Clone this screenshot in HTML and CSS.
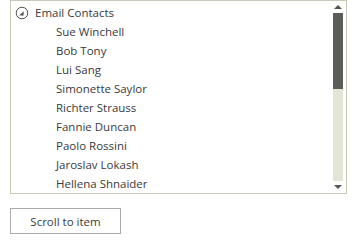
FILE: index.html
```html
<!DOCTYPE html>
<html lang="en">
<head>
    <meta charset="UTF-8">
    <title>Scroll to item</title>
    <link rel="stylesheet" href="styles.css">
</head>
<body>
    <div class="listbox">
        <div class="items">
            <div class="group">
                <svg class="toggle" width="14" height="14" viewBox="0 0 14 14">
                    <circle cx="7" cy="7" r="5.8" fill="none" stroke="#555" stroke-width="1"/>
                    <polygon points="4.2,9.6 8.6,9.6 8.6,5.2" fill="#555"/>
                </svg>
                <span>Email Contacts</span>
            </div>
            <div class="item">Sue Winchell</div>
            <div class="item">Bob Tony</div>
            <div class="item">Lui Sang</div>
            <div class="item">Simonette Saylor</div>
            <div class="item">Richter Strauss</div>
            <div class="item">Fannie Duncan</div>
            <div class="item">Paolo Rossini</div>
            <div class="item">Jaroslav Lokash</div>
            <div class="item">Hellena Shnaider</div>
        </div>
        <div class="scrollbar">
            <div class="arrow up"></div>
            <div class="track">
                <div class="thumb"></div>
            </div>
            <div class="arrow down"></div>
        </div>
    </div>

    <button class="scroll-btn">Scroll to item</button>
</body>
</html>
```

FILE: styles.css
```css
body {
    margin: 0;
    font-family: "Open Sans", "Noto Sans", sans-serif;
    font-size: 11.5px;
    color: #3a3a3a;
    background: white;
}
.listbox {
    display: flex;
    margin-left: 10px;
    width: 335px;
    height: 192px;
    border: 1px solid #c9c9b8;
    overflow: hidden;
}
.items {
    flex: 1;
    padding-top: 2px;
}
.group {
    display: flex;
    align-items: center;
    height: 19px;
    padding-left: 4px;
}
.toggle {
    margin-right: 6px;
}
.item {
    height: 19px;
    line-height: 19px;
    padding-left: 45px;
}
.scrollbar {
    width: 12px;
    margin-right: 2px;
    display: flex;
    flex-direction: column;
}
.arrow {
    height: 12px;
    display: flex;
    justify-content: center;
    align-items: center;
}
.arrow::after {
    content: "";
    border-left: 4px solid transparent;
    border-right: 4px solid transparent;
}
.up::after {
    border-bottom: 4px solid #555;
}
.down::after {
    border-top: 4px solid #555;
}
.track {
    flex: 1;
    background: #e3e6d4;
    margin: 0 1px;
}
.thumb {
    height: 76px;
    background: #5b5e58;
}
.scroll-btn {
    display: block;
    margin: 14px 0 0 10px;
    width: 111px;
    height: 26px;
    border: 1px solid #aaa;
    background: white;
    color: #3a3a3a;
    font-family: "Open Sans", "Noto Sans", sans-serif;
    font-size: 11.5px;
    padding: 0;
}
```
